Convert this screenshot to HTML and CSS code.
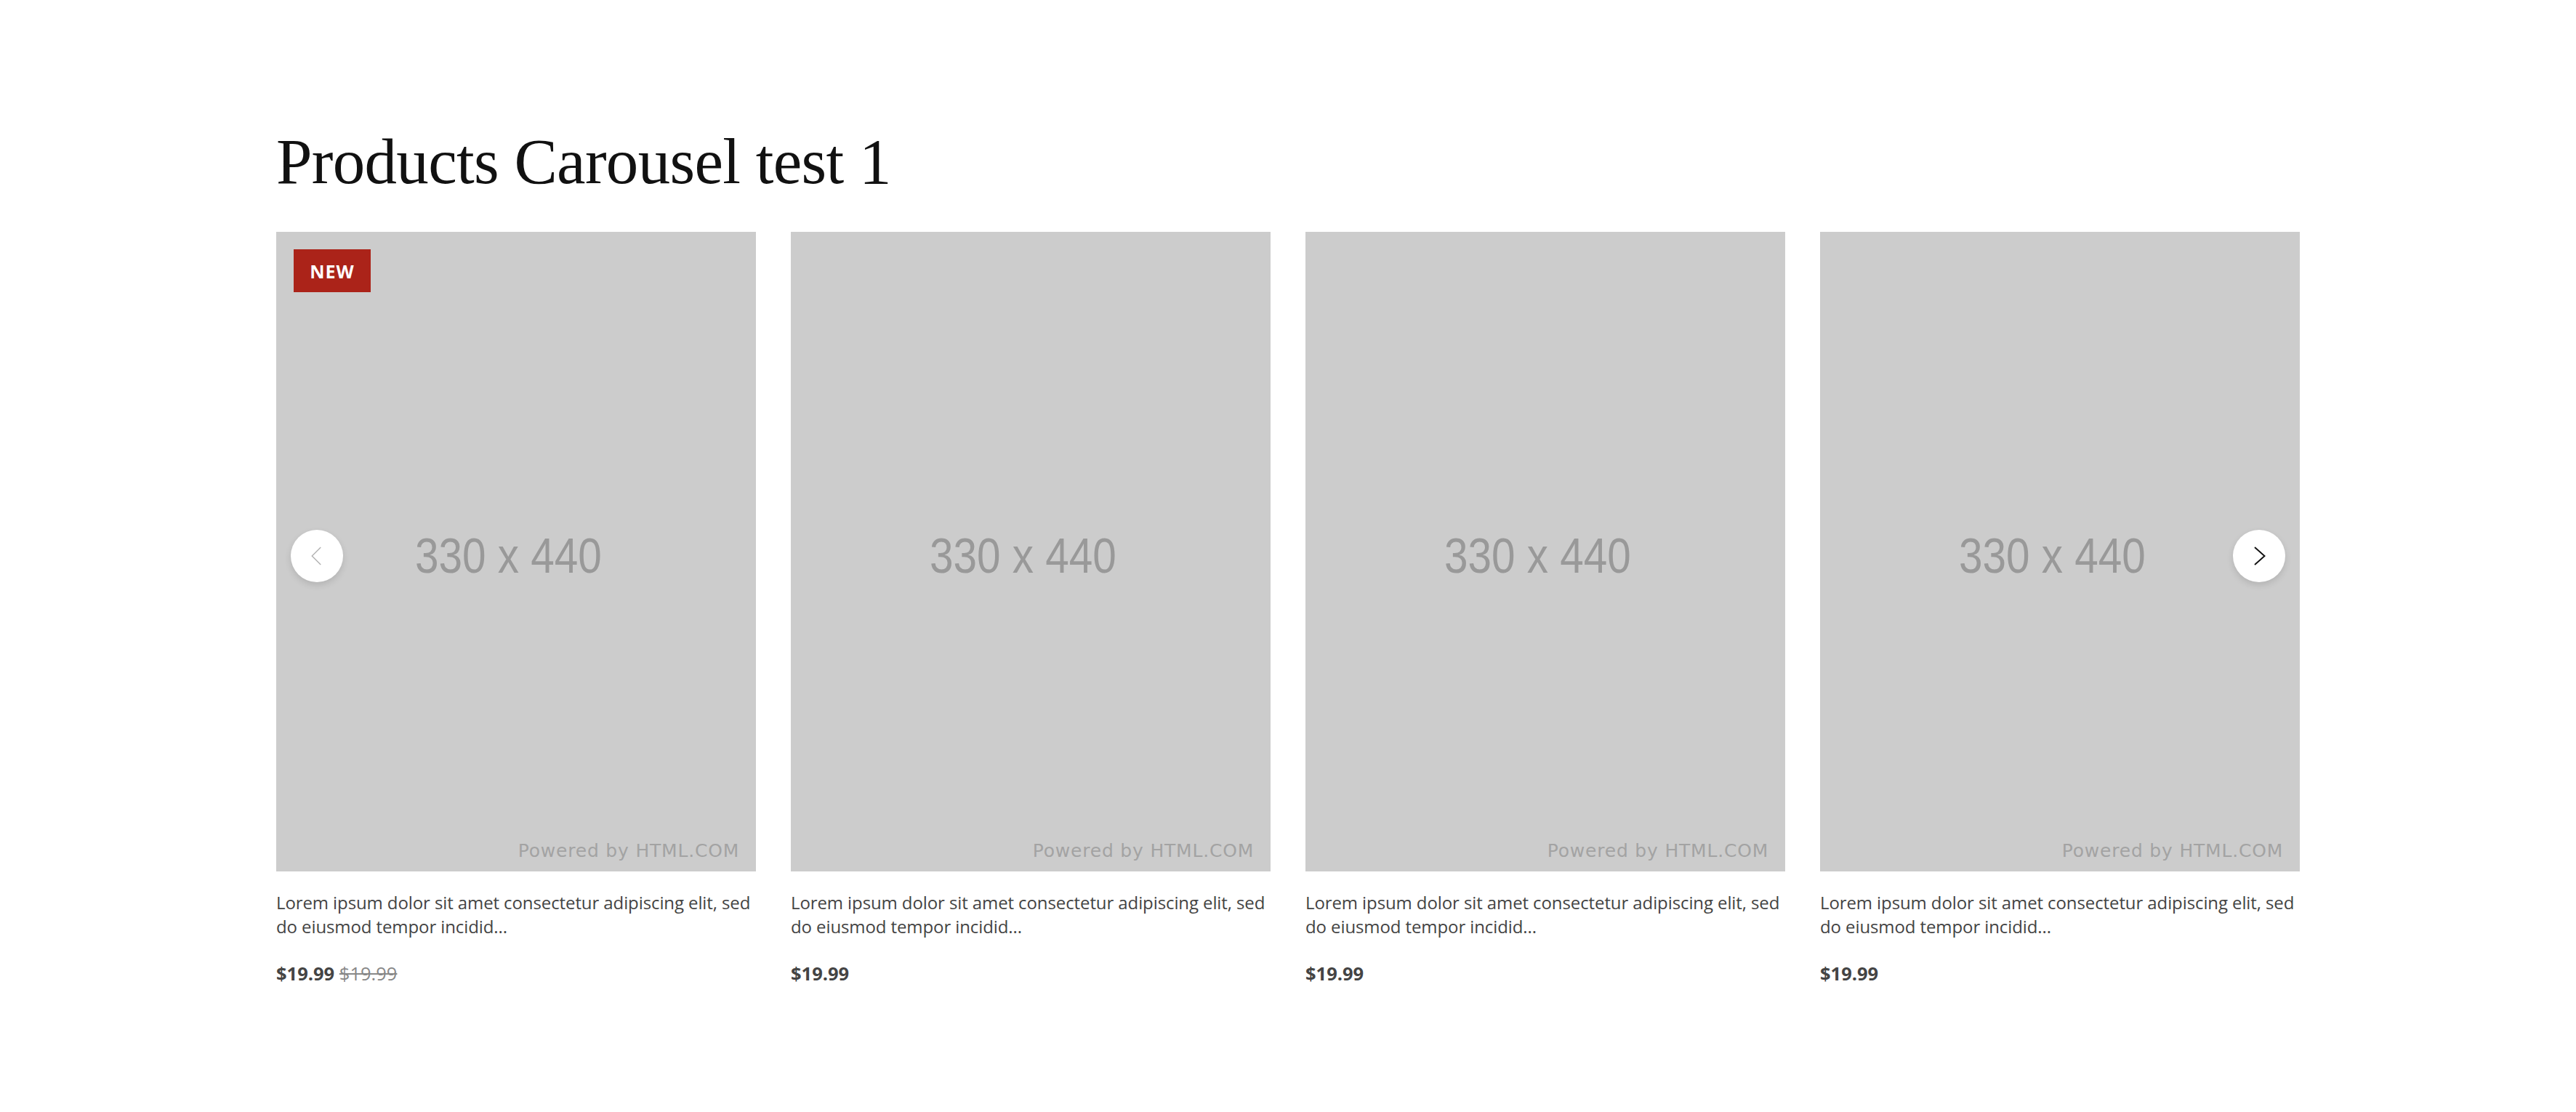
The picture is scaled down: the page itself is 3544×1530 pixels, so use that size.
FILE: index.html
```html
<!DOCTYPE html>
<html lang="en">
<head>
<meta charset="utf-8">
<title>Products Carousel test 1</title>
<link rel="stylesheet" href="styles.css">
</head>
<body>
<main class="section">
  <h1 class="section-title">Products Carousel test 1</h1>
  <div class="carousel">
    <div class="track">
      <article class="product">
        <div class="thumb">
          <span class="badge">NEW</span>
          <span class="ph-size">330 x 440</span>
          <span class="ph-credit">Powered by HTML.COM</span>
        </div>
        <p class="desc">Lorem ipsum dolor sit amet consectetur adipiscing elit, sed do eiusmod tempor incidid...</p>
        <p class="price"><span class="now">$19.99</span> <s class="was">$19.99</s></p>
      </article>
      <article class="product">
        <div class="thumb">
          <span class="ph-size">330 x 440</span>
          <span class="ph-credit">Powered by HTML.COM</span>
        </div>
        <p class="desc">Lorem ipsum dolor sit amet consectetur adipiscing elit, sed do eiusmod tempor incidid...</p>
        <p class="price"><span class="now">$19.99</span></p>
      </article>
      <article class="product">
        <div class="thumb">
          <span class="ph-size">330 x 440</span>
          <span class="ph-credit">Powered by HTML.COM</span>
        </div>
        <p class="desc">Lorem ipsum dolor sit amet consectetur adipiscing elit, sed do eiusmod tempor incidid...</p>
        <p class="price"><span class="now">$19.99</span></p>
      </article>
      <article class="product">
        <div class="thumb">
          <span class="ph-size">330 x 440</span>
          <span class="ph-credit">Powered by HTML.COM</span>
        </div>
        <p class="desc">Lorem ipsum dolor sit amet consectetur adipiscing elit, sed do eiusmod tempor incidid...</p>
        <p class="price"><span class="now">$19.99</span></p>
      </article>
    </div>
    <button class="nav nav-prev" aria-label="Previous">
      <svg viewBox="0 0 24 24"><path d="M15.5 4 L7.5 12 L15.5 20" fill="none" stroke="currentColor" stroke-width="0.9"/></svg>
    </button>
    <button class="nav nav-next" aria-label="Next">
      <svg viewBox="0 0 24 24"><path d="M8 4 L17 12 L8 20" fill="none" stroke="currentColor" stroke-width="1.3"/></svg>
    </button>
  </div>
</main>
</body>
</html>
```

FILE: styles.css
```css
* { box-sizing: border-box; }

html, body {
  margin: 0;
  padding: 0;
  background: #ffffff;
}

body {
  font-family: "Open Sans", "Liberation Sans", sans-serif;
  color: #333333;
}

.section {
  width: 2784px;
  margin: 0 auto;
  padding-top: 167px;
}

.section-title {
  margin: 0 0 42px;
  font-family: "Liberation Serif", "DejaVu Serif", serif;
  font-weight: 400;
  font-size: 89px;
  line-height: 110px;
  color: #111111;
  letter-spacing: -0.7px;
}

.carousel {
  position: relative;
}

.track {
  display: grid;
  grid-template-columns: repeat(4, 660px);
  gap: 48px;
}

.thumb {
  position: relative;
  height: 880px;
  background: #cccccc;
  display: flex;
  align-items: center;
  justify-content: center;
}

.badge {
  position: absolute;
  top: 24px;
  left: 24px;
  width: 106px;
  height: 59px;
  background: #ab2319;
  color: #ffffff;
  font-family: "Open Sans", sans-serif;
  font-weight: 700;
  font-size: 25px;
  letter-spacing: 1px;
  display: flex;
  align-items: center;
  justify-content: center;
}

.ph-size {
  font-family: "Liberation Sans", Arial, sans-serif;
  font-size: 68px;
  color: #999999;
  transform: translateX(-11px) translateY(5px) scaleX(0.86);
}

.ph-credit {
  position: absolute;
  right: 23px;
  bottom: 14px;
  font-family: "DejaVu Sans", sans-serif;
  font-size: 25px;
  letter-spacing: 0.8px;
  color: #a3a3a3;
}

.desc {
  margin: 26px 0 0;
  font-size: 24px;
  line-height: 33px;
  color: #444444;
  letter-spacing: -0.1px;
}

.price {
  margin: 32px 0 0;
  font-size: 25.5px;
  line-height: 33px;
}

.now {
  font-weight: 700;
  color: #444444;
}

.was {
  color: #888888;
}

.nav {
  position: absolute;
  top: 410px;
  width: 72px;
  height: 72px;
  border: 0;
  border-radius: 50%;
  background: #ffffff;
  box-shadow: 0 4px 10px rgba(0, 0, 0, 0.12);
  display: flex;
  align-items: center;
  justify-content: center;
  padding: 0;
  cursor: pointer;
}

.nav svg { width: 36px; height: 36px; }

.nav-prev { left: 20px; color: #b0b0b0; }
.nav-next { right: 20px; color: #111111; }
```
